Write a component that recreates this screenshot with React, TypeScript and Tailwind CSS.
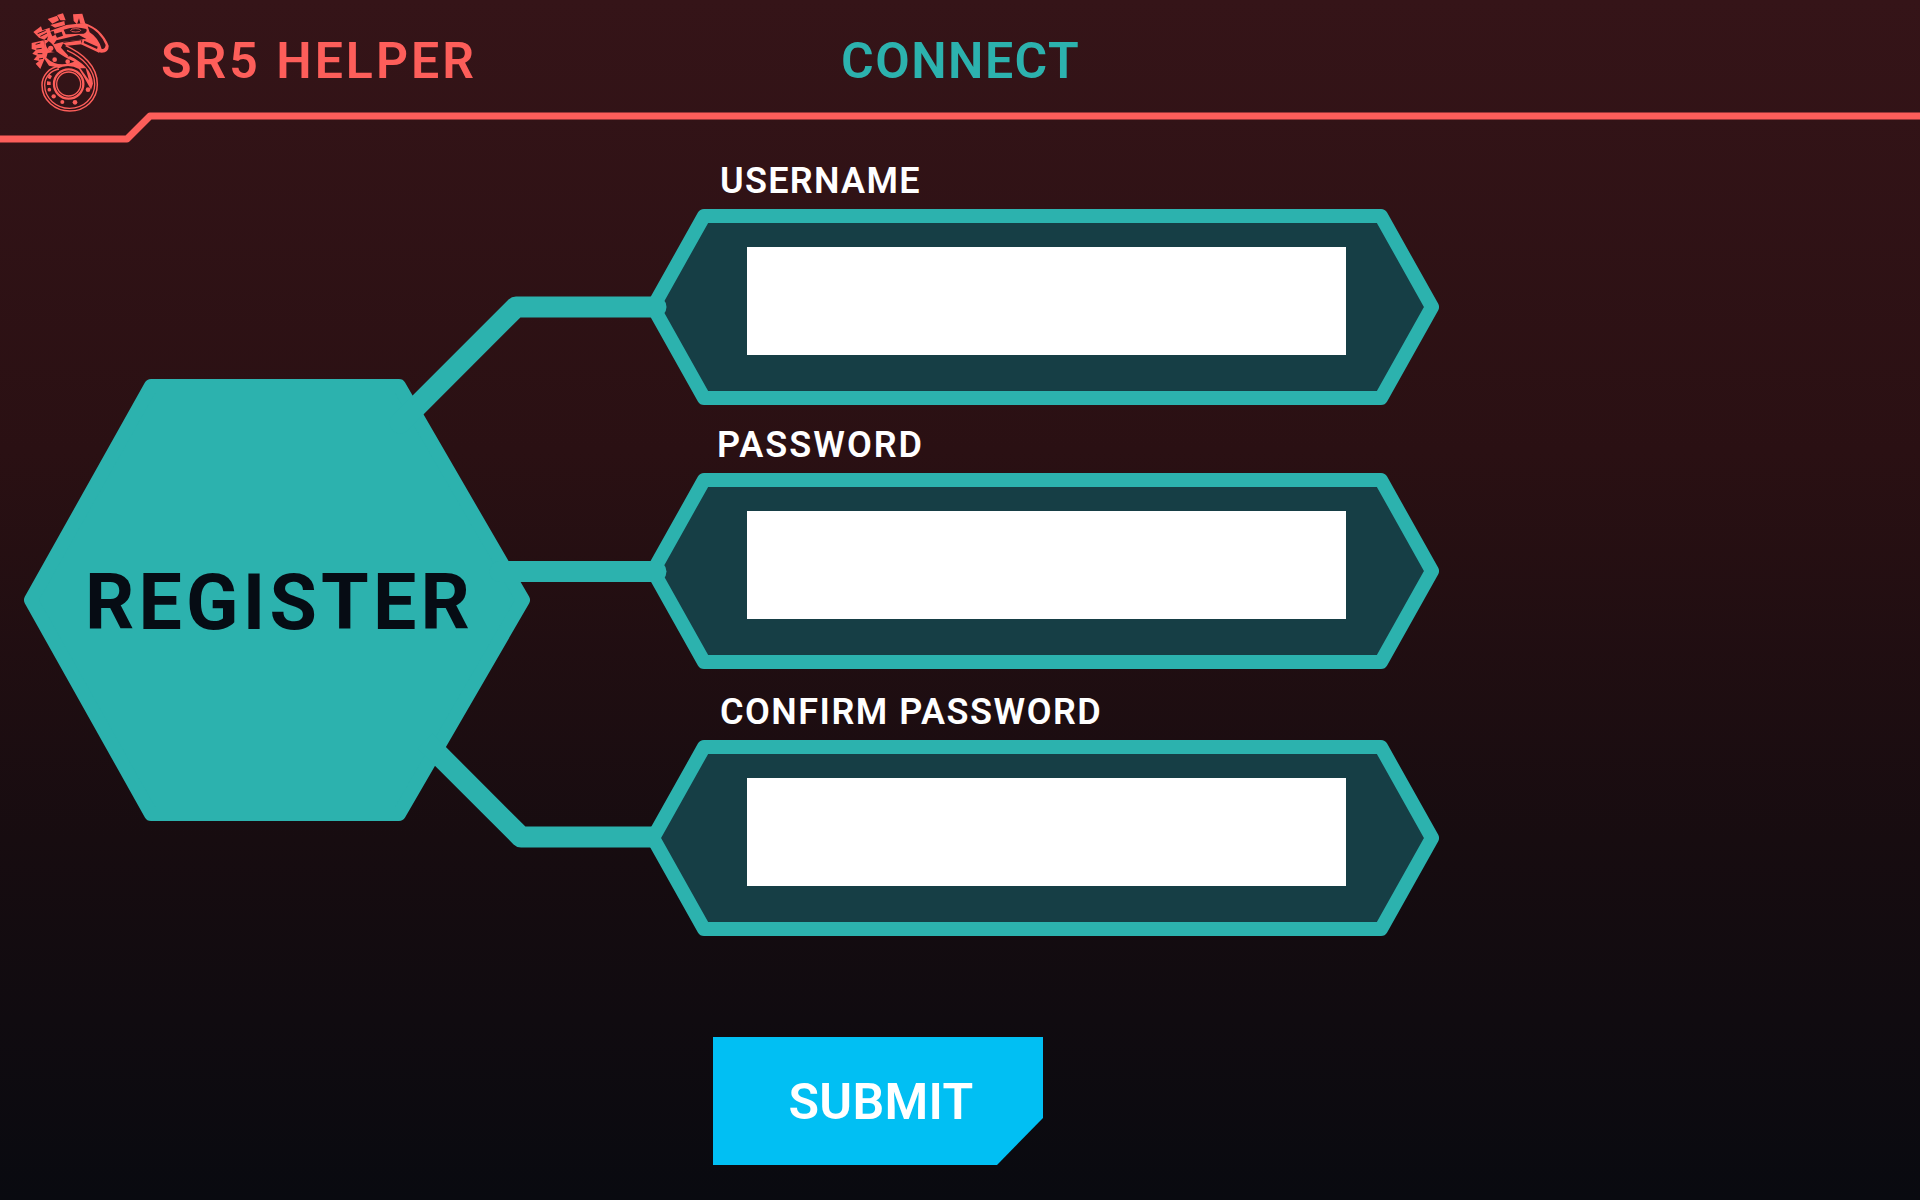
const RED = "#fd5e5a";
const BG = "#34141a";

function Logo({ w = 78, h = 99 }: { w?: number; h?: number }) {
  return (
    <svg width={w} height={h} viewBox="92 38 234 297" fill="none" className="shrink-0">
      {/* coil rims */}
      <path d="M176 198 C146 202 125 226 125 254 C125 300 165 332 208 332 C255 332 291 298 291 252 C291 196 245 158 196 136" stroke={RED} strokeWidth="4.5" />
      <path d="M176 206 C152 210 133 230 133 254 C133 294 168 324 208 324 C250 324 283 294 283 252 C283 206 245 170 200 150" stroke={RED} strokeWidth="4" />
      <circle cx="205" cy="251" r="44" stroke={RED} strokeWidth="7" />
      <circle cx="205" cy="251" r="36" stroke={RED} strokeWidth="4" />
      {/* coil cells */}
      <path d="M146 222 L155 227 L150 237 L142 233 Z" fill={RED} />
      <path d="M140 243 L151 244 L151 254 L140 254 Z" fill={RED} />
      <circle cx="147" cy="268" r="5.5" fill={RED} />
      <circle cx="160" cy="288" r="6.5" fill={RED} />
      <circle cx="186" cy="305" r="6" fill={RED} />
      <circle cx="224" cy="306" r="7" fill={RED} />
      <circle cx="263" cy="268" r="7" fill={RED} />
      <path d="M170 205 Q205 188 236 206 L252 232 L272 268 L278 250 C276 212 245 185 210 168 L186 170 Z" fill={RED} />
      <path d="M240 204 L256 204 L266 240 Z" fill={BG} />
      {/* upper body */}
      <path d="M132 118 L190 126 L182 142 L204 166 L178 202 L146 196 L130 172 Z" fill={RED} />
      <path d="M138 172 Q172 204 222 184 Q190 170 170 154 L142 158 Z" fill={BG} />
      <path d="M136 130 Q138 154 170 156 Q160 136 148 120 Z" fill={BG} />
      <circle cx="151" cy="144" r="8" fill={RED} />
      <circle cx="163" cy="178" r="7" fill={RED} />
      <circle cx="202" cy="184" r="7" fill={RED} />
      {/* crest */}
      <path d="M99 95 L122 78 L126 90 L148 82 L150 102 L132 118 L116 112 Z" fill={RED} />
      <path d="M112 100 L136 90 M120 108 L140 98" stroke={BG} strokeWidth="3" />
      <path d="M94 128 L130 120 L136 168 L120 206 L106 190 L116 182 L100 178 L110 166 L96 160 L106 150 L94 146 Z" fill={RED} />
      <path d="M106 132 L120 128 M108 146 L124 144 M112 160 L126 160 M116 176 L128 174" stroke={BG} strokeWidth="3" />
      <path d="M142 56 L170 46 L176 60 L156 70 Z M170 44 L188 39 L196 60 L180 60 Z M150 74 L192 62 L194 74 L164 82 Z" fill={RED} />
      <path d="M218 42 L246 40 L255 70 L240 70 L236 54 L230 72 L220 62 Z" fill={RED} />
      {/* head */}
      <path d="M148 92 L198 74 L252 68 Q304 84 325 136 Q326 157 304 157 L292 155 L296 142 L240 118 L190 124 L160 134 L140 118 Z" fill={RED} />
      <path d="M190 88 Q226 76 258 86 Q262 96 250 100 L196 102 Z" fill={BG} />
      <ellipse cx="226" cy="90" rx="15" ry="5" stroke={RED} strokeWidth="2.5" />
      <path d="M262 78 Q298 92 316 134 Q314 148 304 146 Q294 112 268 96 Z" fill={BG} />
      <path d="M168 120 L236 104 L258 116 L190 124 L160 132 Z" fill={BG} />
      <path d="M164 100 L184 94 L188 106 L170 112 Z" fill={BG} />
      <path d="M150 94 L160 92 L164 104 L156 108 Z" fill={BG} />
      <path d="M248 116 L298 138 L296 157 L242 132 Z" fill={RED} />
      <path d="M252 121 L292 139 L290 146 L250 128 Z" fill={BG} />
      <path d="M186 128 L242 120 L244 132 L200 136 Z" fill={RED} />
    </svg>
  );
}

function HexField({ label, labelCls, gapTop }: { label: string; labelCls: string; gapTop: string }) {
  return (
    <div className={`flex flex-col gap-[8px] ${gapTop}`}>
      <label className={`h-[40px] text-[36px] font-semibold leading-[40px] text-white ${labelCls}`}>{label}</label>
      <div className="relative flex h-[196px] w-[794px] items-start">
        <svg className="absolute left-0 top-0" width="794" height="196" viewBox="645 209 794 196" fill="none">
          <path
            d="M704 216 L1381 216 L1432 307 L1381 398 L704 398 L653 307 Z"
            fill="#163e45"
            stroke="#2cb2ae"
            strokeWidth="14"
            strokeLinejoin="round"
          />
        </svg>
        <input type="text" className="relative ml-[102px] mt-[38px] h-[108px] w-[599px] bg-white outline-none" />
      </div>
    </div>
  );
}

export default function App() {
  return (
    <div className="relative h-[1200px] w-full overflow-hidden bg-[linear-gradient(180deg,#351418_0px,#2a1013_450px,#170c10_840px,#090a10_1200px)] font-[Roboto,sans-serif]">
      <header className="flex h-[116px] items-start pl-[31px] pt-[13px]">
        <Logo />
        <h1 className="ml-[52px] mt-[23px] h-[50px] w-[680px] text-[50px] font-semibold leading-[50px] tracking-[3px] text-[#fd5e5a]">SR5 HELPER</h1>
        <h2 className="mt-[23px] h-[50px] text-[50px] font-semibold leading-[50px] tracking-[1.5px] text-[#2cb2ae]">CONNECT</h2>
      </header>

      <main className="flex items-start pl-[21px] pt-[45px]">
        <div className="relative mt-[218px] flex h-[442px] w-[511px] shrink-0 items-center justify-center pl-[6px] pt-[7px]">
          <svg className="absolute left-0 top-0" width="511" height="442" viewBox="21 379 511 442" fill="none">
            <path
              d="M151 386 L399 386 L523 600 L399 814 L151 814 L31 600 Z"
              fill="#2cb2ae"
              stroke="#2cb2ae"
              strokeWidth="14"
              strokeLinejoin="round"
            />
          </svg>
          <span className="relative text-[77px] font-bold leading-none tracking-[4.2px] text-[#060c14]">REGISTER</span>
        </div>

        <div className="ml-[113px] flex flex-col items-start">
          <HexField label="USERNAME" labelCls="pl-[75px] tracking-[1.3px]" gapTop="" />
          <HexField label="PASSWORD" labelCls="pl-[72px] tracking-[2px]" gapTop="mt-[20px]" />
          <HexField label="CONFIRM PASSWORD" labelCls="pl-[75px] tracking-[1.5px]" gapTop="mt-[23px]" />
          <button className="ml-[68px] mt-[101px] flex h-[128px] w-[330px] items-center justify-center bg-[#01bff3] pl-[6px] pt-[2px] text-[50px] font-semibold tracking-[0.3px] text-white [clip-path:polygon(0_0,100%_0,100%_81px,284px_100%,0_100%)]">
            SUBMIT
          </button>
        </div>
      </main>

      <svg className="pointer-events-none absolute left-0 top-0" width="1920" height="1200" viewBox="0 0 1920 1200" fill="none">
        <path d="M0 139 L127 139 L150 116 L1920 116" stroke="#fd5e5a" strokeWidth="7" strokeLinejoin="round" />
        <path d="M400 423 L516 307 L656 307" stroke="#2cb2ae" strokeWidth="21" strokeLinejoin="round" strokeLinecap="round" />
        <path d="M500 571.5 L656 571.5" stroke="#2cb2ae" strokeWidth="21" strokeLinecap="round" />
        <path d="M425 741 L521 837 L652 837" stroke="#2cb2ae" strokeWidth="21" strokeLinejoin="round" />
      </svg>
    </div>
  );
}
